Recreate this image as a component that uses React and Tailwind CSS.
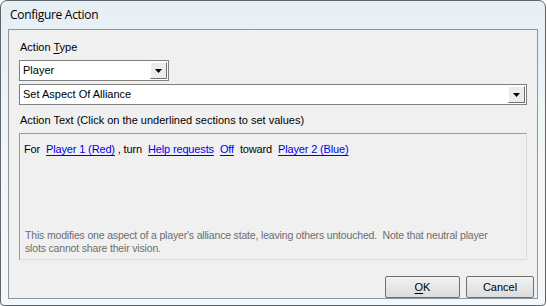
import React from 'react';

const ui = { fontFamily: '"Liberation Sans", Arial, sans-serif' };

function DropArrow() {
  return (
    <div className="flex h-[17px] w-[17px] items-center justify-center border border-t-white border-l-white border-r-[#707070] border-b-[#707070] bg-[#ececec]">
      <svg width="7" height="4" viewBox="0 0 7 4">
        <path d="M0 0h7L3.5 4z" fill="#000" />
      </svg>
    </div>
  );
}

function Combo({ value, className }) {
  return (
    <div className={`flex h-[21px] items-center justify-between border border-[#7f7f7f] bg-white pl-[3px] pr-[1px] ${className}`}>
      <span className="text-[11px] leading-none text-black">{value}</span>
      <DropArrow />
    </div>
  );
}

function Link({ children }) {
  return <span className="text-[#0000ee] underline underline-offset-[2px]">{children}</span>;
}

function Btn({ children, className = '' }) {
  return (
    <button className={`flex h-[22px] items-center justify-center rounded-[2px] border border-[#707070] bg-gradient-to-b from-[#f2f2f2] to-[#dcdcdc] text-[11px] text-black ${className}`}>
      {children}
    </button>
  );
}

export default function App() {
  return (
    <div className="h-[306px] w-[547px] bg-white" style={ui}>
      <div className="flex h-[306px] w-[546px] flex-col rounded-t-[7px] rounded-b-[4px] border border-[#5d646c] bg-gradient-to-b from-[#e6eff4] via-[#f2f6f8] to-[#f5f7f9] px-[7px] pb-[6px]">
        <div className="flex h-[28px] items-center pl-[2px] text-[12px] tracking-[-0.3px] text-black" style={{ fontFamily: '"Open Sans", "Liberation Sans", sans-serif' }}>
          Configure Action
        </div>

        <div className="flex flex-1 flex-col border border-[#8a96a2] bg-[#f0f0f0] pl-[10px] pr-[10px] pt-[10px]">
          <div className="pl-[1px] text-[11px] leading-[14px] text-black">
            Action <span className="underline underline-offset-[2px]">T</span>ype
          </div>
          <Combo value="Player" className="mt-[6px] w-[150px]" />
          <Combo value="Set Aspect Of Alliance" className="mt-[3px] w-full" />

          <div className="mt-[8px] pl-[1px] text-[11px] leading-[14px] text-black">
            Action Text (Click on the underlined sections to set values)
          </div>

          <div className="mt-[6px] flex h-[127px] flex-col justify-between border border-[#9a9a9a] border-r-[#dcdcdc] border-b-[#dcdcdc] bg-[#f0f0f0] px-[4px] pb-[4px] pt-[8px]">
            <div className="flex items-baseline gap-[6px] whitespace-nowrap text-[11px] leading-[14px] tracking-[-0.15px] text-black">
              <span>For</span>
              <span><Link>Player 1 (Red)</Link> , turn</span>
              <Link>Help requests</Link>
              <Link>Off</Link>
              <span>toward</span>
              <Link>Player 2 (Blue)</Link>
            </div>
            <div className="whitespace-nowrap pl-[1px] text-[10.5px] leading-[13px] tracking-[-0.17px] text-[#6d6d6d]">
              This modifies one aspect of a player's alliance state, leaving others untouched.&nbsp; Note that neutral player
              <br />
              slots cannot share their vision.
            </div>
          </div>

          <div className="mt-[16px] -mr-[7px] flex justify-end gap-[6px]">
            <Btn className="w-[75px]">
              <span className="underline underline-offset-[2px]">O</span>K
            </Btn>
            <Btn className="w-[68px]">Cancel</Btn>
          </div>
        </div>
      </div>
    </div>
  );
}
